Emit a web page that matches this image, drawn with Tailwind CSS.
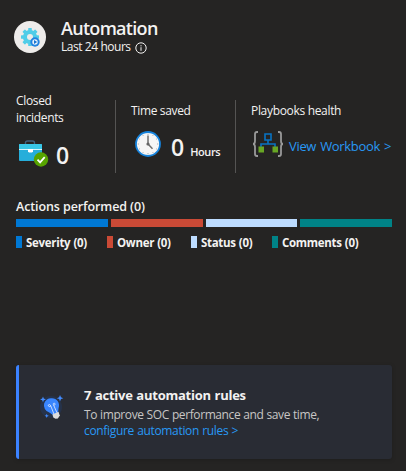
<!DOCTYPE html>
<html lang="en">
<head>
<meta charset="utf-8">
<title>Automation</title>
<script src="https://cdn.jsdelivr.net/npm/@tailwindcss/browser@4"></script>
</head>
<body class="w-[406px] h-[471px] overflow-hidden bg-[#252423] text-[#f3f2f1] font-['Open_Sans','Noto_Sans',sans-serif] whitespace-nowrap">
<main class="flex flex-col h-full pl-4 pr-3.5">
  <header class="flex pt-[15px] h-[100px]">
    <svg class="w-8 h-8 mt-1.5 -ml-0.5 mr-[15px] shrink-0" viewBox="0 0 32 32">
      <circle cx="16" cy="16" r="16" fill="#eeecea"/>
      <g fill="#50cde8"><circle cx="16" cy="16" r="7.1"/>
        <g id="teeth"><rect x="14.2" y="7" width="3.6" height="18" rx=".6"/><rect x="7" y="14.2" width="18" height="3.6" rx=".6"/></g>
        <use href="#teeth" transform="rotate(45 16 16)"/></g>
      <circle cx="16" cy="16" r="3" fill="#eeecea"/>
      <circle cx="21" cy="21" r="4.7" fill="#2383e0"/><circle cx="21" cy="21" r="2.7" fill="#e9f3fb"/><path d="M20 19.1l3.1 1.9-3.1 1.9z" fill="#1673d2"/>
    </svg>
    <div>
      <h1 class="text-[18px] leading-[24px] pt-px font-semibold tracking-[-0.7px]">Automation</h1>
      <div class="flex items-center h-[14px]"><span class="text-[12px] leading-[14px] tracking-[-0.5px] [word-spacing:0.3px]">Last 24 hours</span>
        <svg class="w-3 h-3 ml-1 mt-px" viewBox="0 0 12 12" fill="none" stroke="#f3f2f1"><circle cx="6" cy="6" r="5.2"/><path d="M6 5.2v3.6M6 3.2v1.2"/></svg></div>
    </div>
  </header>
  <section class="flex h-[73px] text-[12px]">
    <div class="w-[100px] border-r border-[#555453]">
      <p class="leading-[17px] -mt-2 tracking-[-0.35px]">Closed<br>incidents</p>
      <div class="flex items-center mt-3">
        <svg class="w-[30px] h-7 ml-[3px] shrink-0" viewBox="0 0 30 28">
          <path d="M6.5 5V3q0-2 2-2h5q2 0 2 2v2" fill="none" stroke="#405f7c" stroke-width="1.4"/>
          <rect y="4" width="23" height="17" rx="1" fill="#26aeda"/><path d="M0 5q0-1 1-1h21q1 0 1 1v4H0z" fill="#38c7e7"/><path d="M0 9h23v1H0z" fill="#d4f4fc"/><path d="M9 9h5v2.5l-1 1h-3l-1-1z" fill="#fff"/>
          <circle cx="22" cy="19.5" r="7.2" fill="#57a300"/><path d="M18.5 19.7l2.6 2.7 4.6-5.2" fill="none" stroke="#fff" stroke-width="1.8"/>
        </svg>
        <span class="text-[23px] leading-7 font-semibold ml-[7px] mt-[3px]">0</span>
      </div>
    </div>
    <div class="w-[120px] border-r border-[#555453] pl-[15px]">
      <p class="leading-[18px] mt-0.5 tracking-[-0.35px]">Time saved</p>
      <div class="flex items-start mt-[11px]">
        <svg class="w-[26px] h-[26px] ml-1 shrink-0" viewBox="0 0 26 26">
          <circle cx="13" cy="13" r="12" fill="#f6f6f6" stroke="#1683dc" stroke-width="1.8"/>
          <path d="M13 4.5V13l4.5 4.8" fill="none" stroke="#707070" stroke-width="1.5"/><circle cx="13" cy="13" r="1.6" fill="#666"/>
          <path d="M13 2.8v1M13 22.2v1M2.8 13h1M22.2 13h1M18.1 4.2l-.4.7M21.8 7.9l-.7.4M21.8 18.1l-.7-.4M18.1 21.8l-.4-.7M7.9 21.8l.4-.7M4.2 18.1l.7-.4M4.2 7.9l.7.4M7.9 4.2l.4.7" stroke="#888" stroke-width=".8"/>
        </svg>
        <span class="text-[23px] leading-6 font-semibold ml-[10px] mt-1">0</span><span class="text-[11px] leading-4 font-semibold ml-[6px] mt-[13px] tracking-[-0.4px]">Hours</span>
      </div>
    </div>
    <div class="pl-[15px]">
      <p class="leading-[18px] mt-0.5 tracking-[-0.32px]">Playbooks health</p>
      <div class="flex items-center mt-[11px]">
        <svg class="w-[32px] h-[26px] ml-px shrink-0" viewBox="0 0 32 26">
          <path d="M6 1H5Q3 1 3 3v7q0 3-2 3 2 0 2 3v7q0 2 2 2h1M26 1h1q2 0 2 2v7q0 3 2 3-2 0-2 3v7q0 2-2 2h-1" fill="none" stroke="#999" stroke-width="1.8"/>
          <path d="M13 3h6v6h-6zM16 9v4M9 17v-4h14v4" fill="none" stroke="#0873c4" stroke-width="1.6"/><path d="M6.5 15.5h5.5v6H6.5zM20.5 15.5H26v6h-5.5z" fill="#68a624"/>
        </svg>
        <a class="text-[#2899f5] text-[13px] leading-5 ml-[5px] mt-1 tracking-[-0.32px] [word-spacing:1px]">View Workbook &gt;</a>
      </div>
    </div>
  </section>
  <section class="mt-[25px] h-[167px]">
    <h2 class="text-[12.5px] leading-[18px] font-semibold tracking-[-0.1px]">Actions performed (0)</h2>
    <div class="grid grid-cols-4 gap-[3px] h-2 mt-[3px]"><i class="bg-[#0078d4]"></i><i class="bg-[#ca4a36]"></i><i class="bg-[#bddcff]"></i><i class="bg-[#008387]"></i></div>
    <div class="flex mt-[7px] text-[11.5px] leading-[18px] font-bold tracking-[-0.3px] [word-spacing:0.4px]">
      <div class="flex w-[91px]"><i class="w-1.5 h-3 mt-0.5 mr-1 bg-[#0078d4]"></i>Severity (0)</div>
      <div class="flex w-[84px]"><i class="w-1.5 h-3 mt-0.5 mr-1 bg-[#ca4a36]"></i>Owner (0)</div>
      <div class="flex w-[81px]"><i class="w-1.5 h-3 mt-0.5 mr-1 bg-[#bddcff]"></i>Status (0)</div>
      <div class="flex"><i class="w-1.5 h-3 mt-0.5 mr-1 bg-[#008387]"></i>Comments (0)</div>
    </div>
  </section>
  <section class="flex h-[94px] bg-[#292c34] border-l-[3px] border-[#3b82ff] rounded-[3px] shadow-[0_1px_4px_#00000030]">
    <svg class="w-[24px] h-[27px] mt-[29px] ml-[21px] mr-[20px] shrink-0" viewBox="0 0 24 27">
      <circle cx="11" cy="13" r="11" fill="#26334b"/>
      <path d="M12 4.2a7.2 7.2 0 0 1 6.6 9.7l-.6 5-5 2.2-4.1-2.9A7.2 7.2 0 0 1 12 4.2z" fill="#3986ff"/>
      <path d="M14 20.2L10.8 12c-1 1.2-2.8.5-2.5-.8.4-1.2 2-.8 2.5.8M17 18.8l-3.3-7.5c1.3.1 1.8-1.5.8-2.1-1-.4-1.7.8-.8 2.1" fill="none" stroke="#e8f0ff" stroke-width=".8"/>
      <path d="M12.5 20.5l6-2.8 1.3 3.7-1.9 3.2-2.4.2-2.2-1.4z" fill="#ddd"/>
      <path d="M3 2.5l.8 2.1 2.1.8-2.1.8L3 8.3l-.8-2.1L.1 5.4l2.1-.8zM20 1l1 2.3 2.3.9-2.3.9-1 2.3-.9-2.3-2.3-.9 2.3-.9zM6.7 19.7l.6 1.5 1.5.6-1.5.6-.6 1.5-.6-1.5-1.5-.6 1.5-.6z" fill="#438cff"/>
    </svg>
    <div class="pt-[21px]">
      <h3 class="text-[13px] leading-[19px] font-bold tracking-[-0.25px] [word-spacing:0.6px]">7 active automation rules</h3>
      <p class="text-[12px] leading-4 mt-0.5 text-[#c8c6c4] tracking-[-0.4px] [word-spacing:0.3px]">To improve SOC performance and save time,</p>
      <a class="block text-[12px] leading-4 text-[#2899f5] tracking-[-0.33px] [word-spacing:0.4px]">configure automation rules &gt;</a>
    </div>
  </section>
</main>
</body>
</html>
